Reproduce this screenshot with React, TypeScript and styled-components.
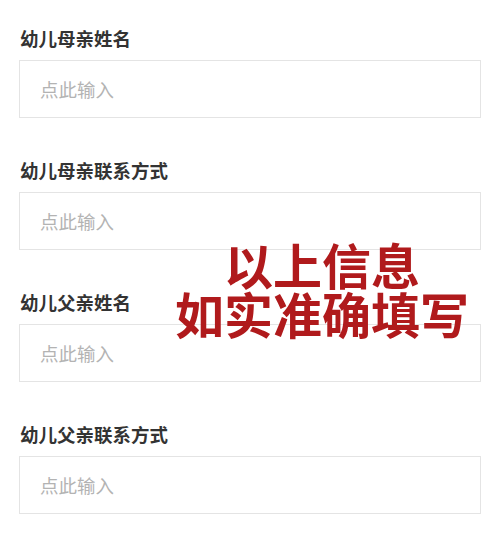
import React from "react";
import styled, { createGlobalStyle } from "styled-components";

const Global = createGlobalStyle`
  html, body { margin: 0; padding: 0; background: #ffffff; }
  body { font-family: "Noto Sans CJK SC", "Noto Sans", sans-serif; }
`;

const Page = styled.div`
  position: relative;
  width: 499px;
  height: 546px;
  overflow: hidden;
  background: #ffffff;
  padding: 26px 18px 0 19px;
  box-sizing: border-box;
  display: flex;
  flex-direction: column;
  gap: 40px;
`;

const Field = styled.div`
  display: flex;
  flex-direction: column;
  gap: 10px;
`;

const Label = styled.div`
  font-size: 18.5px;
  line-height: 24px;
  height: 24px;
  font-weight: 600;
  color: #333333;
  padding-left: 1px;
`;

const InputBox = styled.div`
  box-sizing: border-box;
  height: 58px;
  width: 462px;
  border: 1px solid #e4e4e4;
  display: flex;
  align-items: center;
  padding-left: 20px;
  font-size: 18.5px;
  color: #b3b3b3;
`;

const Notice = styled.div`
  position: absolute;
  left: 172px;
  top: 239px;
  width: 300px;
  text-align: center;
  font-size: 49px;
  line-height: 49px;
  font-weight: 600;
  color: #b01a1c;
`;

const fields = ["幼儿母亲姓名", "幼儿母亲联系方式", "幼儿父亲姓名", "幼儿父亲联系方式"];

export default function App() {
  return (
    <>
      <Global />
      <Page>
        {fields.map((f) => (
          <Field key={f}>
            <Label>{f}</Label>
            <InputBox>点此输入</InputBox>
          </Field>
        ))}
        <Notice>
          以上信息
          <br />
          如实准确填写
        </Notice>
      </Page>
    </>
  );
}
